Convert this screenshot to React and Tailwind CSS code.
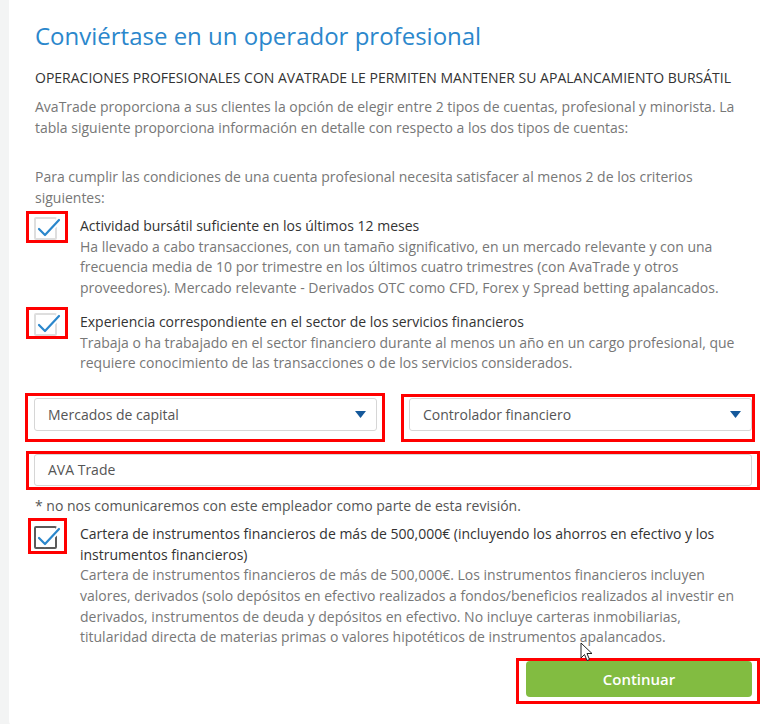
import React from 'react'

const font = { fontFamily: '"Open Sans", "Liberation Sans", sans-serif' }

// casilla marcada: cuadro + marca azul que sobresale
const CheckBox = ({ dark }) => (
	<svg width="28" height="28" viewBox="0 0 28 28" className="block">
		<rect x="1" y="4" width="21" height="21" fill="white" stroke={dark ? '#5a5a5a' : '#dedede'} strokeWidth="2" rx="1" />
		<polyline points="5,15 11,21 25,6" fill="none" stroke="white" strokeWidth="6" strokeLinecap="round" strokeLinejoin="round" />
		<polyline points="5,15 11,21 25,6" fill="none" stroke="#2b87cc" strokeWidth="2.2" strokeLinecap="round" strokeLinejoin="round" />
	</svg>
)

const Criterio = ({ title, children, dark, mark }) => (
	<div className="flex">
		<div className="w-[46px] shrink-0">
			<div className={`relative w-[28px] ${mark}`}>
				<CheckBox dark={dark} />
				<div className={`absolute border-[3px] border-[#ff0000] ${dark ? '-left-[6px] -right-[5px] -top-[5px] -bottom-[3px]' : '-left-[8px] -right-[6px] -top-[3px] -bottom-[1px]'}`} />
			</div>
		</div>
		<div className="flex-1 text-[14px] leading-[20.7px]">
			<div className="text-[#333]">{title}</div>
			<div className="text-[#777]">{children}</div>
		</div>
	</div>
)

const Caret = () => (
	<svg width="11" height="7" viewBox="0 0 11 7">
		<path d="M0 0 L11 0 L5.5 7 Z" fill="#15599b" />
	</svg>
)

export default function App() {
	return (
		<div className="bg-[#f3f4f4] pl-[9px] pb-[4px] min-h-[724px]" style={font}>
			<div className="relative bg-white rounded-bl-[6px] pl-[25px] pr-[19px] pt-[19px] pb-[30px]">
				<h1 className="text-[24px] leading-[33px] text-[#2b87cc] pl-[1px]">Conviértase en un operador profesional</h1>

				<h2 className="mt-[16px] text-[14px] leading-[20px] text-[#333] uppercase pl-[1px]">
					Operaciones profesionales con AvaTrade le permiten mantener su apalancamiento bursátil
				</h2>

				<p className="mt-[8px] text-[14px] leading-[21px] text-[#777] pl-[1px]">
					AvaTrade proporciona a sus clientes la opción de elegir entre 2 tipos de cuentas, profesional y minorista. La tabla siguiente proporciona información en detalle con respecto a los dos tipos de cuentas:
				</p>

				<p className="mt-[29px] text-[14px] leading-[20.5px] text-[#777] pl-[1px]">
					Para cumplir las condiciones de una cuenta profesional necesita satisfacer al menos 2 de los criterios siguientes:
				</p>

				<div className="mt-[8px]">
					<Criterio title="Actividad bursátil suficiente en los últimos 12 meses" mark="-mt-[2px]">
						Ha llevado a cabo transacciones, con un tamaño significativo, en un mercado relevante y con una frecuencia media de 10 por trimestre en los últimos cuatro trimestres (con AvaTrade y otros proveedores). Mercado relevante - Derivados OTC como CFD, Forex y Spread betting apalancados.
					</Criterio>
				</div>

				<div className="mt-[13px]">
					<Criterio title="Experiencia correspondiente en el sector de los servicios financieros" mark="-mt-[2px]">
						Trabaja o ha trabajado en el sector financiero durante al menos un año en un cargo profesional, que requiere conocimiento de las transacciones o de los servicios considerados.
					</Criterio>
				</div>

				<div className="mt-[24px] flex gap-[32px]">
					<div className="relative flex-1">
						<div className="flex h-[33px] items-center justify-between rounded-[3px] border border-[#d6d6d6] pl-[13px] pr-[10px] text-[14px] text-[#555]">
							<span>Mercados de capital</span>
							<Caret />
						</div>
						<div className="absolute -left-[9px] -right-[8px] -top-[5px] -bottom-[11px] border-[3px] border-[#ff0000]" />
					</div>
					<div className="relative flex-1">
						<div className="flex h-[33px] items-center justify-between rounded-[3px] border border-[#d6d6d6] pl-[13px] pr-[10px] text-[14px] text-[#555]">
							<span>Controlador financiero</span>
							<Caret />
						</div>
						<div className="absolute -left-[8px] -right-[3px] -top-[4px] -bottom-[11px] border-[3px] border-[#ff0000]" />
					</div>
				</div>

				<div className="relative mt-[23px]">
					<div className="flex h-[32px] items-center rounded-[3px] border border-[#d6d6d6] pl-[13px] text-[14px] text-[#555]">
						AVA Trade
					</div>
					<div className="absolute -left-[8px] -right-[8px] -top-[3px] -bottom-[4px] border-[3px] border-[#ff0000]" />
				</div>

				<p className="mt-[9px] text-[14px] leading-[21px] text-[#555] pl-[1px]">
					* no nos comunicaremos con este empleador como parte de esta revisión.
				</p>

				<div className="mt-[8px]">
					<Criterio dark title="Cartera de instrumentos financieros de más de 500,000€ (incluyendo los ahorros en efectivo y los instrumentos financieros)" mark="-mt-[1px]">
						Cartera de instrumentos financieros de más de 500,000€. Los instrumentos financieros incluyen valores, derivados (solo depósitos en efectivo realizados a fondos/beneficios realizados al investir en derivados, instrumentos de deuda y depósitos en efectivo. No incluye carteras inmobiliarias, titularidad directa de materias primas o valores hipotéticos de instrumentos apalancados.
					</Criterio>
				</div>

				<div className="mt-[13px] flex justify-end">
					<div className="relative">
						<button className="h-[36px] w-[226px] rounded-[4px] bg-[#82bc41] text-[15px] font-semibold text-white">
							Continuar
						</button>
						<div className="absolute -left-[10px] -right-[8px] -top-[3px] -bottom-[7px] border-[3px] border-[#ff0000]" />
					</div>
				</div>

				{/* puntero del ratón */}
				<svg className="absolute left-[571px] top-[642px]" width="13" height="20" viewBox="0 0 13 20">
					<path d="M1 1 L1 16 L4.5 12.5 L7 18.5 L9.5 17.5 L7 11.5 L12 11.5 Z" fill="white" stroke="#222" strokeWidth="1" strokeLinejoin="round" />
				</svg>
			</div>
		</div>
	)
}
